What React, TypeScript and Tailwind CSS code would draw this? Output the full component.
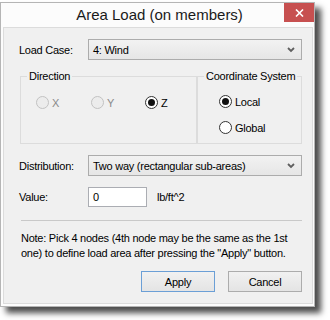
import clsx from "clsx";

const body = { fontFamily: '"Liberation Sans", Arial, sans-serif' };

function Radio({
  label,
  checked,
  disabled,
  className,
}: {
  label: string;
  checked?: boolean;
  disabled?: boolean;
  className?: string;
}) {
  return (
    <div className={clsx("flex h-[15px] items-center gap-[3px]", className)}>
      <span
        className={clsx(
          "flex h-[13px] w-[13px] items-center justify-center rounded-full border",
          disabled ? "border-[#c2c2c2] bg-[#ececec]" : "border-[#333333] bg-white"
        )}
      >
        {checked && <span className="h-[7px] w-[7px] rounded-full bg-[#111]" />}
      </span>
      <span className={disabled ? "text-[#8a8a8a]" : "text-black"}>{label}</span>
    </div>
  );
}

function Select({ value }: { value: string }) {
  return (
    <div className="flex h-[21px] flex-1 items-center justify-between border border-[#acacac] bg-linear-to-b from-[#f2f2f2] to-[#e6e6e6] pl-[4px] pr-[6px]">
      <span>{value}</span>
      <svg width="8" height="6" viewBox="0 0 8 6">
        <path d="M1 1 L4 4 L7 1" fill="none" stroke="#5f5f5f" strokeWidth="1.8" />
      </svg>
    </div>
  );
}

function Button({ children, primary }: { children: string; primary?: boolean }) {
  return (
    <button
      className={clsx(
        "flex h-[21px] w-[74px] items-center justify-center border bg-linear-to-b from-[#f1f1f1] to-[#e4e4e4] text-black",
        primary ? "border-[#6b9fd6]" : "border-[#acacac]"
      )}
    >
      {children}
    </button>
  );
}

export default function App() {
  return (
    <div className="h-[320px] w-[330px] bg-white pt-[2px]" style={body}>
      <div className="flex h-[305px] w-[315px] flex-col border border-[#b5b5b5] bg-[#fcfcfc] shadow-[6px_6px_6px_rgba(0,0,0,0.7)]">
        {/* title bar */}
        <div className="flex h-[24px] items-start">
          <div className="w-[34px]" />
          <div className="flex h-[25px] flex-1 items-center justify-center text-[15px] text-[#1a1a1a]">
            Area Load (on members)
          </div>
          <div className="flex h-[19px] w-[30px] items-center justify-center bg-[#c75050]">
            <svg width="9" height="8" viewBox="0 0 9 8">
              <path d="M1 0.5 L8 7.5 M8 0.5 L1 7.5" stroke="white" strokeWidth="1.6" />
            </svg>
          </div>
        </div>

        {/* client area */}
        <div className="ml-[2px] flex h-[277px] w-[310px] flex-col border border-[#dcdcdc] bg-[#f0f0f0] pl-[15px] pr-[10px] text-[11px] leading-[14px] tracking-[-0.25px] text-black">
          <div className="mt-[11px] flex h-[21px] items-center">
            <span className="w-[69px]">Load Case:</span>
            <Select value="4: Wind" />
          </div>

          <div className="mt-[9px] flex">
            <fieldset className="ml-[1px] h-[75px] w-[177px] border border-[#dcdcdc] pl-[15px]">
              <legend className="ml-[-9px] px-[2px]">Direction</legend>
              <div className="mt-[12px] flex">
                <Radio label="X" disabled className="w-[55px]" />
                <Radio label="Y" disabled className="w-[54px]" />
                <Radio label="Z" checked />
              </div>
            </fieldset>
            <fieldset className="h-[75px] flex-1 border border-[#dcdcdc] pl-[21px]">
              <legend className="ml-[-15px] px-[2px]">Coordinate System</legend>
              <div className="mt-[11px] flex flex-col gap-[11px]">
                <Radio label="Local" checked />
                <Radio label="Global" />
              </div>
            </fieldset>
          </div>

          <div className="mt-[11px] flex h-[21px] items-center">
            <span className="w-[69px]">Distribution:</span>
            <Select value="Two way (rectangular sub-areas)" />
          </div>

          <div className="mt-[11px] flex h-[20px] items-center">
            <span className="w-[69px]">Value:</span>
            <div className="flex h-[20px] w-[59px] items-center border border-[#abadb3] bg-white pl-[4px]">0</div>
            <span className="ml-[10px]">lb/ft^2</span>
          </div>

          <div className="ml-[2px] mt-[13px] h-px bg-[#c9c9c9]" />

          <p className="ml-[2px] mt-[10px] whitespace-nowrap leading-[15px]">
            Note: Pick 4 nodes (4th node may be the same as the 1st
            <br />
            one) to define load area after pressing the "Apply" button.
          </p>

          <div className="mt-[10px] flex justify-end gap-[13px]">
            <Button primary>Apply</Button>
            <Button>Cancel</Button>
          </div>
        </div>
      </div>
    </div>
  );
}
